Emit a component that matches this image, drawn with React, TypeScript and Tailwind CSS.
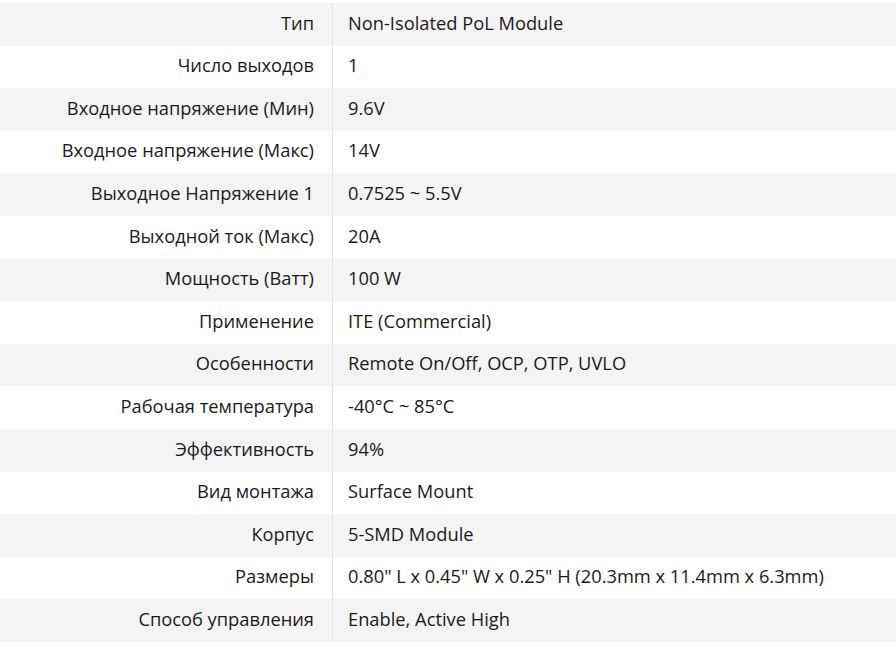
import React from "react";

const rows: [string, string][] = [
  ["Тип", "Non-Isolated PoL Module"],
  ["Число выходов", "1"],
  ["Входное напряжение (Мин)", "9.6V"],
  ["Входное напряжение (Макс)", "14V"],
  ["Выходное Напряжение 1", "0.7525 ~ 5.5V"],
  ["Выходной ток (Макс)", "20A"],
  ["Мощность (Ватт)", "100 W"],
  ["Применение", "ITE (Commercial)"],
  ["Особенности", "Remote On/Off, OCP, OTP, UVLO"],
  ["Рабочая температура", "-40°C ~ 85°C"],
  ["Эффективность", "94%"],
  ["Вид монтажа", "Surface Mount"],
  ["Корпус", "5-SMD Module"],
  ["Размеры", "0.80\" L x 0.45\" W x 0.25\" H (20.3mm x 11.4mm x 6.3mm)"],
  ["Способ управления", "Enable, Active High"],
];

export default function App() {
  return (
    <div
      className="w-[896px] h-[647px] bg-white pt-[3px] text-[#1a1a1a] text-[18.3px]"
      style={{ fontFamily: '"Open Sans", sans-serif' }}
    >
      {rows.map(([k, v], i) => (
        <div
          key={i}
          className={`flex h-[42.6px] items-center ${i % 2 === 0 ? "bg-[#f4f4f4]" : "bg-white"}`}
        >
          <div className="w-[333px] h-full flex items-center justify-end pr-[18px] pb-[4px] border-r border-[#e2e2e2] whitespace-nowrap">
            {k}
          </div>
          <div className="flex-1 pl-[15px] pb-[4px] whitespace-nowrap">{v}</div>
        </div>
      ))}
    </div>
  );
}
